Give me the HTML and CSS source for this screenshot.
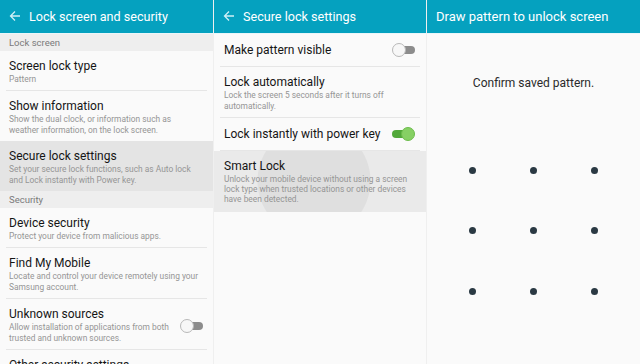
FILE: index.html
```html
<!DOCTYPE html>
<html>
<head>
<meta charset="utf-8">
<link rel="stylesheet" href="styles.css">
</head>
<body>
<div class="screens">
  <section class="panel">
    <header class="bar">
      <svg class="back" width="12" height="12" viewBox="0 0 12 12"><path d="M11 6H1.5M6 1.5L1.5 6L6 10.5" fill="none" stroke="#cfeff6" stroke-width="1.3"/></svg>
      <span>Lock screen and security</span>
    </header>
    <div class="body">
      <div class="section">Lock screen</div>
      <div class="item">
        <div class="title">Screen lock type</div>
        <div class="sub">Pattern</div>
      </div>
      <div class="rule"></div>
      <div class="item">
        <div class="title">Show information</div>
        <div class="sub">Show the dual clock, or information such as<br>weather information, on the lock screen.</div>
      </div>
      <div class="item active">
        <div class="title">Secure lock settings</div>
        <div class="sub">Set your secure lock functions, such as Auto lock<br>and Lock instantly with Power key.</div>
      </div>
      <div class="section">Security</div>
      <div class="item">
        <div class="title">Device security</div>
        <div class="sub">Protect your device from malicious apps.</div>
      </div>
      <div class="rule"></div>
      <div class="item">
        <div class="title">Find My Mobile</div>
        <div class="sub">Locate and control your device remotely using your<br>Samsung account.</div>
      </div>
      <div class="rule"></div>
      <div class="item row">
        <div>
          <div class="title">Unknown sources</div>
          <div class="sub">Allow installation of applications from both<br>trusted and unknown sources.</div>
        </div>
        <span class="switch"></span>
      </div>
      <div class="rule"></div>
      <div class="item">
        <div class="title">Other security settings</div>
      </div>
    </div>
  </section>

  <section class="panel p2">
    <header class="bar">
      <svg class="back" width="12" height="12" viewBox="0 0 12 12"><path d="M11 6H1.5M6 1.5L1.5 6L6 10.5" fill="none" stroke="#cfeff6" stroke-width="1.3"/></svg>
      <span>Secure lock settings</span>
    </header>
    <div class="body">
      <div class="item row single">
        <div class="title">Make pattern visible</div>
        <span class="switch"></span>
      </div>
      <div class="rule"></div>
      <div class="item">
        <div class="title">Lock automatically</div>
        <div class="sub">Lock the screen 5 seconds after it turns off<br>automatically.</div>
      </div>
      <div class="rule"></div>
      <div class="item row single">
        <div class="title">Lock instantly with power key</div>
        <span class="switch on"></span>
      </div>
      <div class="rule"></div>
      <div class="item ripple">
        <div class="title">Smart Lock</div>
        <div class="sub tight">Unlock your mobile device without using a screen<br>lock type when trusted locations or other devices<br>have been detected.</div>
      </div>
    </div>
  </section>

  <section class="panel p3">
    <header class="bar">
      <span>Draw pattern to unlock screen</span>
    </header>
    <div class="body">
      <p class="confirm">Confirm saved pattern.</p>
      <div class="dots">
        <i></i><i></i><i></i>
        <i></i><i></i><i></i>
        <i></i><i></i><i></i>
      </div>
    </div>
  </section>
</div>
</body>
</html>
```

FILE: styles.css
```css
* { box-sizing: border-box; }
html, body { margin: 0; padding: 0; }
body {
  width: 640px;
  height: 364px;
  overflow: hidden;
  background: #fafafa;
  font-family: Roboto, "Open Sans", "Liberation Sans", sans-serif;
}
.screens {
  display: grid;
  grid-template-columns: 213px 213px 214px;
  height: 364px;
}
.panel {
  display: flex;
  flex-direction: column;
  min-width: 0;
  overflow: hidden;
}
.panel + .panel { border-left: 1px solid #efefef; }
.bar {
  height: 34px;
  flex: none;
  background: #05a1bf;
  border-bottom: 1px solid #eaf6f9;
  color: #fff;
  font-size: 12.6px;
  display: flex;
  align-items: center;
  gap: 8px;
  padding: 0 0 1px 9px;
}
.panel + .panel .bar { box-shadow: inset 1px 0 0 #5dc3d7; margin-left: -1px; padding-left: 10px; }
.p3 .bar { padding-left: 11px; font-size: 13px; }
.back { flex: none; }
.body { flex: 1; background: #fafafa; }
.section {
  background: #eeeeee;
  color: #7a7a7a;
  font-size: 9.5px;
  height: 17px;
  line-height: 17px;
  padding-left: 9px;
}
.item {
  padding: 8px 9px 5px;
}
.p2 .item { padding-left: 10px; padding-right: 10px; }
.item.active { background: #e4e4e4; }
.row {
  display: flex;
  align-items: center;
  justify-content: space-between;
}
.row.single { padding-top: 9px; padding-bottom: 9px; }
.title {
  font-size: 12px;
  line-height: 14px;
  color: #151515;
  white-space: nowrap;
}
.sub {
  margin-top: 1px;
  font-size: 8.4px;
  line-height: 11px;
  color: #959595;
  white-space: nowrap;
}
.sub.tight { line-height: 10px; }
.rule {
  height: 1px;
  background: #e6e6e6;
  margin: 0 6px;
}
.switch {
  position: relative;
  flex: none;
  width: 23px;
  height: 14px;
  margin-right: 1px;
}
.switch::before {
  content: "";
  position: absolute;
  left: 6px; right: 0; top: 3px; height: 8px;
  background: #8c8c8c;
  border-radius: 4px;
}
.switch::after {
  content: "";
  position: absolute;
  left: 0; top: 0;
  width: 14px; height: 14px;
  border-radius: 50%;
  background: #f7f7f7;
  border: 1px solid #b8b8b8;
  box-sizing: border-box;
}
.switch.on::before { left: 0; right: 6px; background: #52a83a; }
.switch.on::after { left: auto; right: 0; background: #86d064; border-color: #6cbc4c; }
.ripple {
  background:
    radial-gradient(circle at 100px 30px, #dfdfdf 0, #dfdfdf 56px, transparent 57px),
    #eaeaea;
  padding-bottom: 8px;
}
.confirm {
  margin: 42px 0 0;
  text-align: center;
  font-size: 12px;
  color: #2a2a2a;
}
.dots {
  display: grid;
  grid-template-columns: repeat(3, 61px);
  grid-auto-rows: 60.5px;
  justify-content: center;
  margin-top: 50px;
}
.dots i {
  justify-self: center;
  align-self: center;
  width: 7px;
  height: 7px;
  border-radius: 50%;
  background: #2a3943;
}
```
